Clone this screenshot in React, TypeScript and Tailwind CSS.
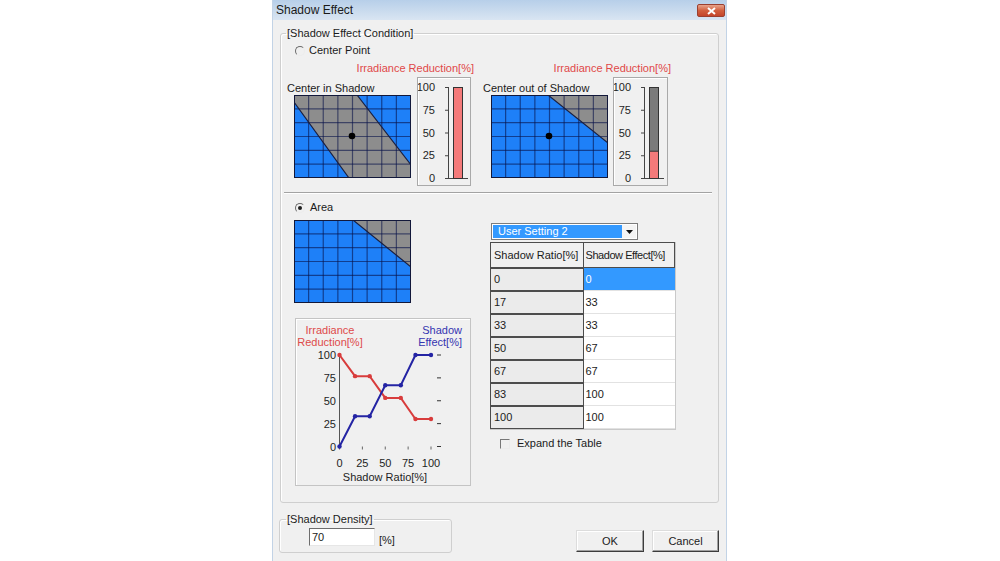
import React from 'react';

// Shadow Effect dialog (Windows style)

const rows: [string, string][] = [
  ['0', '0'],
  ['17', '33'],
  ['33', '33'],
  ['50', '67'],
  ['67', '67'],
  ['83', '100'],
  ['100', '100'],
];

function Radio({ checked = false }: { checked?: boolean }) {
  return (
    <span className="flex h-[10px] w-[10px] items-center justify-center rounded-full border border-t-[#6a6a6a] border-l-[#6a6a6a] border-r-[#ececec] border-b-[#ececec]">
      {checked && <span className="h-[4px] w-[4px] rounded-full bg-[#1e1e1e]" />}
    </span>
  );
}

function ShadowGrid({ shade, dot = false }: { shade: string; dot?: boolean }) {
  const w = 117;
  const h = 83;
  const vx = Array.from({ length: 7 }, (_, i) => ((i + 1) * w) / 8);
  const hy = Array.from({ length: 5 }, (_, i) => ((i + 1) * h) / 6);
  return (
    <svg width={w} height={h} viewBox={`0 0 ${w} ${h}`} className="block">
      <rect x={0} y={0} width={w} height={h} fill="#1e80f8" />
      <polygon points={shade} fill="#8d8d8d" />
      {vx.map((x) => (
        <line key={`v${x}`} x1={x} y1={0} x2={x} y2={h} stroke="#08124a" strokeOpacity={0.6} strokeWidth={1.2} />
      ))}
      {hy.map((y) => (
        <line key={`h${y}`} x1={0} y1={y} x2={w} y2={y} stroke="#08124a" strokeOpacity={0.6} strokeWidth={1.2} />
      ))}
      <polygon points={shade} fill="none" stroke="#1b2040" strokeWidth={1.2} />
      <rect x={0.5} y={0.5} width={w - 1} height={h - 1} fill="none" stroke="#12183a" />
      {dot && <circle cx={58} cy={41} r={3.3} fill="#000" />}
    </svg>
  );
}

function BarBox({ value, wide = false }: { value: number; wide?: boolean }) {
  const map = (v: number) => 100 - v * 0.91;
  const ticks = [100, 75, 50, 25, 0];
  const top = map(value);
  return (
    <div
      className={`h-[109px] border border-[#a9a9a9] shadow-[inset_1px_1px_0_#ffffff] ${
        wide ? 'w-[55px]' : 'w-[54px]'
      }`}
    >
      <svg width={52} height={107} className="block">
        {ticks.map((t) => (
          <g key={t}>
            <text x={17} y={map(t) + 4} textAnchor="end" fontSize={11} fill="#1e1e1e">
              {t}
            </text>
            <line x1={27} x2={30} y1={map(t) + 0.5} y2={map(t) + 0.5} stroke="#444" />
          </g>
        ))}
        <line x1={30.5} x2={30.5} y1={map(100)} y2={map(0) + 1} stroke="#444" />
        <line x1={27} x2={50} y1={100.5} y2={100.5} stroke="#444" />
        <rect x={35.5} y={map(100) + 0.5} width={9} height={91} fill="#7b7b7b" stroke="#333" />
        <rect x={35.5} y={top + 0.5} width={9} height={100 - top} fill="#f47a7a" stroke="#333" />
      </svg>
    </div>
  );
}

function EffectChart() {
  const X = (v: number) => 43.5 + v * 0.915;
  const Y = (v: number) => 127.5 - v * 0.915;
  const ratio = [0, 17, 33, 50, 67, 83, 100];
  const effect = [0, 33, 33, 67, 67, 100, 100];
  const irr = effect.map((e) => 100 - e * 0.7);
  const ticks = [100, 75, 50, 25, 0];
  const red = ratio.map((r, i) => `${X(r)},${Y(irr[i])}`).join(' ');
  const blue = ratio.map((r, i) => `${X(r)},${Y(effect[i])}`).join(' ');
  return (
    <div className="ml-px mt-[15px] h-[168px] w-[176px] border border-[#c4c4c4] shadow-[inset_1px_1px_0_#ffffff]">
      <svg width={174} height={166} className="block">
        <text x={34} y={15} textAnchor="middle" fontSize={11} fill="#de4a4a">
          Irradiance
        </text>
        <text x={34} y={27} textAnchor="middle" fontSize={11} fill="#de4a4a">
          Reduction[%]
        </text>
        <text x={166} y={15} textAnchor="end" fontSize={11} fill="#3434b0">
          Shadow
        </text>
        <text x={166} y={27} textAnchor="end" fontSize={11} fill="#3434b0">
          Effect[%]
        </text>
        {ticks.map((t) => (
          <g key={t}>
            <text x={40} y={Y(t) + 4} textAnchor="end" fontSize={11} fill="#1e1e1e">
              {t}
            </text>
            <line x1={141} x2={145} y1={Y(t)} y2={Y(t)} stroke="#333" />
            <line x1={X(100 - t)} x2={X(100 - t)} y1={Y(0)} y2={Y(0) + 3} stroke="#666" />
            <text x={X(100 - t)} y={148} textAnchor="middle" fontSize={11} fill="#1e1e1e">
              {100 - t}
            </text>
          </g>
        ))}
        <line x1={X(0)} x2={X(0)} y1={Y(100)} y2={Y(0)} stroke="#555" />
        <polyline points={red} fill="none" stroke="#d83c3c" strokeWidth={2} />
        <polyline points={blue} fill="none" stroke="#2424a4" strokeWidth={2} />
        {ratio.map((r, i) => (
          <g key={r}>
            <circle cx={X(r)} cy={Y(irr[i])} r={2.2} fill="#d83c3c" />
            <circle cx={X(r)} cy={Y(effect[i])} r={2.2} fill="#2424a4" />
          </g>
        ))}
        <text x={89} y={162} textAnchor="middle" fontSize={11} fill="#1e1e1e">
          Shadow Ratio[%]
        </text>
      </svg>
    </div>
  );
}

export default function App() {
  return (
    <div className="h-[561px] w-[1000px] overflow-hidden bg-white font-['Liberation_Sans',Arial,sans-serif] text-[11px] leading-[13px] text-[#1b1b1b]">
      <div className="ml-[272px] flex h-[561px] w-[455px] flex-col border-x border-[#c2d3e6] bg-[#f0f0f0]">
        {/* Title bar */}
        <div className="flex h-[20px] items-start bg-linear-to-b from-[#b7cfe9] to-[#d9e5f2]">
          <span className="pl-[3px] pt-[3px] text-[12px] leading-[15px] text-[#1a1a1a]">Shadow Effect</span>
          <div className="ml-auto mr-px mt-[4px] flex h-[13px] w-[28px] items-center justify-center rounded-[2px] border border-[#9b4030] bg-linear-to-b from-[#e6a38c] via-[#d2603f] to-[#c4452b]">
            <svg width={9} height={8} viewBox="0 0 9 8">
              <path d="M1 1 L8 7 M8 1 L1 7" stroke="#ffffff" strokeWidth={2} />
            </svg>
          </div>
        </div>

        <div className="flex flex-1 flex-col px-[7px]">
          {/* Shadow Effect Condition */}
          <fieldset className="mt-[7px] h-[476px] rounded-[3px] border border-[#cfcfcf] shadow-[inset_1px_1px_0_#ffffff]">
            <legend className="ml-[5px] px-px">[Shadow Effect Condition]</legend>

            <div className="mt-[4px] flex h-[13px] items-center pl-[14px]">
              <Radio />
              <span className="ml-[4px]">Center Point</span>
            </div>

            <div className="mt-[5px] flex items-start pl-[6px]">
              {/* Center in shadow */}
              <div className="flex flex-col">
                <div className="-mr-[3px] text-right text-[#e04848]">Irradiance Reduction[%]</div>
                <div className="mt-[2px] flex items-start">
                  <div className="flex flex-col pt-[5px]">
                    <span>Center in Shadow</span>
                    <div className="ml-[7px]">
                      <ShadowGrid shade="0,0 63,0 117,70 117,83 55,83 0,7" dot />
                    </div>
                  </div>
                  <div className="ml-[6px]">
                    <BarBox value={100} />
                  </div>
                </div>
              </div>

              {/* Center out of shadow */}
              <div className="ml-[12px] flex flex-col">
                <div className="-mr-[3px] text-right text-[#e04848]">Irradiance Reduction[%]</div>
                <div className="mt-[2px] flex items-start">
                  <div className="flex flex-col pt-[5px]">
                    <span>Center out of Shadow</span>
                    <div className="ml-[8px]">
                      <ShadowGrid shade="57,0 117,0 117,48" dot />
                    </div>
                  </div>
                  <div className="ml-[5px]">
                    <BarBox value={30} wide />
                  </div>
                </div>
              </div>
            </div>

            <div className="ml-[3px] mr-[6px] mt-[6px] border-t border-b border-t-[#a3a3a3] border-b-white" />

            <div className="mt-[7px] flex items-start">
              {/* Area */}
              <div className="flex w-[190px] flex-col pl-[13px]">
                <div className="flex h-[13px] items-center pl-px">
                  <Radio checked />
                  <span className="ml-[5px]">Area</span>
                </div>
                <div className="mt-[6px]">
                  <ShadowGrid shade="59,0 117,0 117,47" />
                </div>
                <EffectChart />
              </div>

              {/* Table */}
              <div className="ml-[19px] flex flex-col pt-[22px]">
                <div className="ml-px flex h-[17px] w-[147px] border border-[#7c7c7c] bg-white p-px">
                  <div className="flex flex-1 items-center bg-[#3399ff] pl-[5px] text-white">User Setting 2</div>
                  <div className="flex w-[14px] items-center justify-center bg-[#f4f4f4]">
                    <svg width={7} height={4} viewBox="0 0 7 4">
                      <polygon points="0,0 7,0 3.5,4" fill="#111" />
                    </svg>
                  </div>
                </div>

                <div className="mt-[2px] flex w-[186px] flex-col border-r border-b border-[#c9c9c9]">
                  <div className="flex h-[26px]">
                    <div className="flex w-[94px] items-center border border-[#4c4c4c] bg-[#f0f0f0] pl-[3px]">
                      Shadow Ratio[%]
                    </div>
                    <div className="flex w-[92px] items-center border border-l-0 border-[#4c4c4c] bg-[#f0f0f0] pl-[2px] tracking-[-0.45px]">
                      Shadow Effect[%]
                    </div>
                  </div>
                  {rows.map(([ratio, effect], i) => (
                    <div key={ratio} className="flex h-[23px]">
                      <div className="flex w-[94px] items-center border border-[#4c4c4c] bg-[#ebebeb] pl-[3px]">
                        {ratio}
                      </div>
                      <div
                        className={`flex w-[92px] items-center border-b border-[#e2e2e2] pl-[2px] ${
                          i === 0 ? 'bg-[#3399ff] text-white' : 'bg-white'
                        }`}
                      >
                        {effect}
                      </div>
                    </div>
                  ))}
                </div>

                <div className="mt-[7px] flex h-[13px] items-center pl-[10px]">
                  <span className="h-[10px] w-[10px] border border-t-[#777777] border-l-[#777777] border-r-[#ececec] border-b-[#ececec]" />
                  <span className="ml-[7px]">Expand the Table</span>
                </div>
              </div>
            </div>
          </fieldset>

          {/* Bottom */}
          <div className="mt-[10px] flex items-start">
            <fieldset className="-ml-px h-[40px] w-[173px] rounded-[3px] border border-[#cfcfcf] shadow-[inset_1px_1px_0_#ffffff]">
              <legend className="ml-[6px] px-px">[Shadow Density]</legend>
              <div className="ml-[29px] mt-[2px] flex items-start">
                <div className="flex h-[18px] w-[66px] items-center border border-t-[#6d6d6d] border-l-[#6d6d6d] border-r-[#e6e6e6] border-b-[#e6e6e6] bg-white pl-[2px]">
                  70
                </div>
                <span className="ml-[4px] mt-[6px]">[%]</span>
              </div>
            </fieldset>

            <div className="ml-auto mt-[17px] flex gap-[8px]">
              <button className="flex h-[22px] w-[68px] items-center justify-center border border-t-[#dcdcdc] border-l-[#dcdcdc] border-r-[#3c3c3c] border-b-[#3c3c3c] bg-[#f0f0f0] shadow-[inset_-1px_-1px_0_#a0a0a0,inset_1px_1px_0_#ffffff]">
                OK
              </button>
              <button className="flex h-[22px] w-[67px] items-center justify-center border border-t-[#dcdcdc] border-l-[#dcdcdc] border-r-[#3c3c3c] border-b-[#3c3c3c] bg-[#f0f0f0] shadow-[inset_-1px_-1px_0_#a0a0a0,inset_1px_1px_0_#ffffff]">
                Cancel
              </button>
            </div>
          </div>
        </div>
      </div>
    </div>
  );
}
